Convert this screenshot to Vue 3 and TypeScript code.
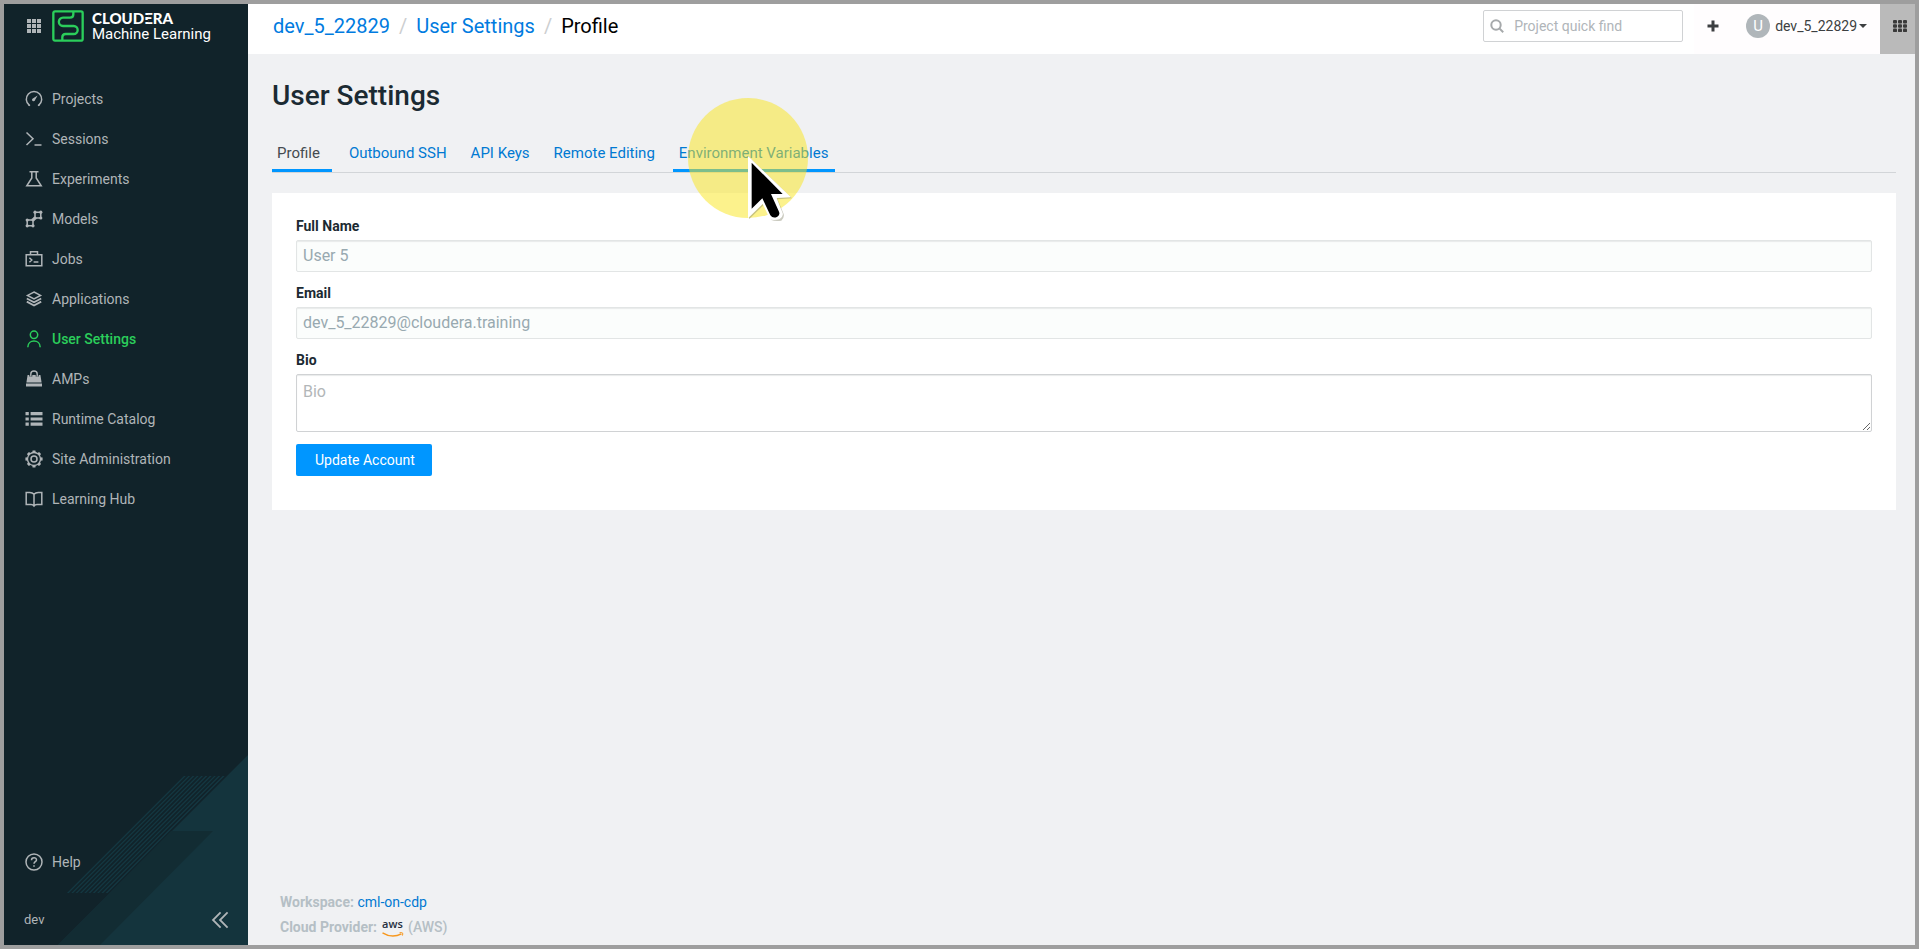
<script setup lang="ts">
import { ref } from 'vue'

interface NavItem {
  label: string
  icon: string
  active?: boolean
}

const navItems: NavItem[] = [
  { label: 'Projects', icon: 'gauge' },
  { label: 'Sessions', icon: 'prompt' },
  { label: 'Experiments', icon: 'flask' },
  { label: 'Models', icon: 'models' },
  { label: 'Jobs', icon: 'jobs' },
  { label: 'Applications', icon: 'layers' },
  { label: 'User Settings', icon: 'user', active: true },
  { label: 'AMPs', icon: 'bag' },
  { label: 'Runtime Catalog', icon: 'list' },
  { label: 'Site Administration', icon: 'gear' },
  { label: 'Learning Hub', icon: 'book' },
]

const tabs: string[] = ['Profile', 'Outbound SSH', 'API Keys', 'Remote Editing', 'Environment Variables']
const currentTab = ref('Profile')
const hoveredTab = 'Environment Variables'

const fullName = ref('User 5')
const email = ref('dev_5_22829@cloudera.training')
const bio = ref('')
const search = ref('')

const stripes = Array.from({ length: 10 }, (_, i) => i)
const cells = Array.from({ length: 9 }, (_, i) => ({ x: (i % 3) * 5, y: Math.floor(i / 3) * 5 }))
const teeth = Array.from({ length: 8 }, (_, i) => i * 45)
</script>

<template>
  <div class="frame">
    <aside class="sidebar">
      <svg class="decor" viewBox="0 0 244 190" aria-hidden="true">
        <path d="M244 0V190H54z" fill="#14343d" />
        <path d="M167 76H209L96 190H54z" fill="#122c33" />
        <path
          v-for="i in stripes"
          :key="i"
          :d="`M${180 + i * 4.3} 21h1.8l-117 117h-1.8z`"
          fill="#143842"
        />
      </svg>

      <div class="brand">
        <button class="icon-button" type="button" aria-label="Switch application">
          <svg width="14" height="14" viewBox="0 0 14 14" fill="#b0b5b8">
            <rect v-for="(c, i) in cells" :key="i" :x="c.x" :y="c.y" width="4" height="4" />
          </svg>
        </button>
        <svg class="logo" width="32" height="32" viewBox="0 0 96 96" fill="none" stroke="#2bce5b" stroke-width="7">
          <rect x="4" y="4" width="88" height="88" rx="5" />
          <path d="M64 4V13Q64 23 54 23H33A12 12 0 0 0 33 48H65A12 12 0 0 1 65 72H41Q31 72 31 82V92" />
        </svg>
        <div class="brand-text">
          <span class="brand-name">CLOUD<span class="bars">E</span>RA</span>
          <span class="brand-product">Machine Learning</span>
        </div>
      </div>

      <nav class="nav">
        <a v-for="item in navItems" :key="item.label" href="#" class="nav-link" :class="{ active: item.active }">
          <svg class="nav-icon" viewBox="0 0 18 18" fill="none" stroke="currentColor" stroke-width="1.5">
            <template v-if="item.icon === 'gauge'">
              <path d="M4.2 15.2A7.7 7.7 0 1 1 13.8 15.2" />
              <path d="M3.4 14.6l1.6 1M14.6 14.6l-1.6 1" />
              <path d="M12.6 5.4L10.2 9.8A1.6 1.6 0 1 1 8.2 8.2z" fill="currentColor" stroke="none" />
            </template>
            <template v-else-if="item.icon === 'prompt'">
              <path d="M1.5 2.5L8 8.7L1.5 15M9.5 15H16.5" />
            </template>
            <template v-else-if="item.icon === 'flask'">
              <path d="M4.5 1.8H13.5M6.8 2V8L1.8 15.8H16.2L11.2 8V2" />
            </template>
            <template v-else-if="item.icon === 'models'">
              <path d="M10 2.2H15.8V8H10zM2.2 10H8V15.8H2.2zM8 10L10 8" />
              <g fill="currentColor" stroke="none">
                <circle cx="10" cy="2.2" r="1.6" /><circle cx="15.8" cy="2.2" r="1.6" />
                <circle cx="15.8" cy="8" r="1.6" /><circle cx="9.8" cy="8.2" r="1.8" />
                <circle cx="2.2" cy="10" r="1.6" /><circle cx="8.2" cy="9.8" r="1.8" />
                <circle cx="2.2" cy="15.8" r="1.6" /><circle cx="8" cy="15.8" r="1.6" />
              </g>
            </template>
            <template v-else-if="item.icon === 'jobs'">
              <path d="M1.2 4.8H16.8V15.8H1.2zM5.5 4.6V1.8H12.5V4.6M4.4 7.8L6.8 10L4.4 12.2M8.6 12H13.4" />
            </template>
            <template v-else-if="item.icon === 'layers'">
              <path d="M9 2L15.5 5.4L9 8.8L2.5 5.4z" />
              <path d="M1.8 8.5L9 12.2L16.2 8.5M1.8 11.6L9 15.5L16.2 11.6" stroke-width="1.8" />
            </template>
            <template v-else-if="item.icon === 'user'">
              <circle cx="9" cy="4.8" r="3.7" />
              <path d="M2.8 17.2C3 9 15 9 15.2 17.2" />
            </template>
            <template v-else-if="item.icon === 'bag'">
              <path d="M2.6 5H15.4L16.6 12.4H1.4zM1 13.4H17V16.4H1z" fill="currentColor" stroke="none" />
              <path d="M5.8 6.6V4A3.2 3 0 0 1 12.2 4V6.6" stroke="#11232a" stroke-width="3" />
              <path d="M5.8 6.4V4A3.2 3 0 0 1 12.2 4V6.4" stroke-width="1.4" />
            </template>
            <template v-else-if="item.icon === 'list'">
              <path
                d="M.5 2H3.8V5.2H.5zM5.6 2H17.5V5.2H5.6zM.5 7.4H3.8V10.6H.5zM5.6 7.4H17.5V10.6H5.6zM.5 12.6H3.8V15.8H.5zM5.6 12.6H17.5V15.8H5.6z"
                fill="currentColor"
                stroke="none"
              />
            </template>
            <template v-else-if="item.icon === 'gear'">
              <circle cx="9" cy="9" r="6.5" stroke-width="1.3" />
              <path
                v-for="a in teeth"
                :key="a"
                d="M7.2 2.6L7.6 .4H10.4L10.8 2.6z"
                :transform="`rotate(${a} 9 9)`"
                fill="currentColor"
                stroke="none"
              />
              <circle cx="9" cy="9" r="3" />
            </template>
            <template v-else-if="item.icon === 'book'">
              <path d="M9 4.2C7.8 2.8 6.4 2.4 4.8 2.4H1.2V14.6H6Q8 14.6 9 16Q10 14.6 12 14.6H16.8V2.4H13.2C11.6 2.4 10.2 2.8 9 4.2V15.6" />
            </template>
          </svg>
          {{ item.label }}
        </a>
      </nav>

      <a href="#" class="nav-link help">
        <svg class="nav-icon" viewBox="0 0 18 18" fill="none" stroke="currentColor" stroke-width="1.5">
          <circle cx="9" cy="9" r="8" />
          <path d="M6.5 7.2C6.5 3.8 11.6 3.9 11.5 7C11.4 8.8 9 8.7 9 10.8" />
          <path d="M9 12.2V13.8" />
        </svg>
        Help
      </a>
      <div class="sidebar-foot">
        <span>dev</span>
        <button class="icon-button" type="button" aria-label="Collapse sidebar">
          <svg width="18" height="18" viewBox="0 0 18 18" fill="none" stroke="#b0b5b8" stroke-width="1.8">
            <path d="M9.6 1.4L2 9L9.6 16.6M16.6 1.4L9 9L16.6 16.6" />
          </svg>
        </button>
      </div>
    </aside>

    <div class="main">
      <header class="topbar">
        <nav class="crumbs" aria-label="Breadcrumb">
          <a href="#">dev_5_22829</a>
          <span class="slash">/</span>
          <a href="#">User Settings</a>
          <span class="slash">/</span>
          <span>Profile</span>
        </nav>
        <label class="search">
          <svg width="14" height="14" viewBox="0 0 14 14" fill="none" stroke="#a6a9ab" stroke-width="2">
            <circle cx="6" cy="6" r="4.7" />
            <path d="M9.4 9.4L13.2 13.2" />
          </svg>
          <input v-model="search" type="text" placeholder="Project quick find" aria-label="Project quick find" />
        </label>
        <div class="account">
          <button class="icon-button" type="button" aria-label="Create">
            <svg width="12" height="12" viewBox="0 0 12 12" stroke="#3c3f41" stroke-width="3">
              <path d="M6 .5V11.5M.5 6H11.5" />
            </svg>
          </button>
          <button class="user-menu" type="button">
            <span class="avatar">U</span>
            <span>dev_5_22829</span>
            <svg width="8" height="4" viewBox="0 0 8 4" fill="#3c3f41"><path d="M0 0H8L4 4z" /></svg>
          </button>
        </div>
        <button class="apps" type="button" aria-label="Applications">
          <svg width="14" height="12" viewBox="0 0 14 14" preserveAspectRatio="none" fill="#3a3a3a">
            <rect v-for="(c, i) in cells" :key="i" :x="c.x" :y="c.y" width="4" height="4" rx="1" />
          </svg>
        </button>
      </header>

      <main class="content">
        <h1>User Settings</h1>
        <nav class="tabs">
          <a
            v-for="tab in tabs"
            :key="tab"
            href="#"
            class="tab"
            :class="{ current: tab === currentTab, hovered: tab === hoveredTab }"
            @click.prevent="currentTab = tab"
          >
            {{ tab }}
            <span v-if="tab === hoveredTab" class="pointer" aria-hidden="true">
              <svg viewBox="0 0 120 120">
                <circle cx="60" cy="60" r="60" fill="#f9e519" fill-opacity=".5" />
                <g transform="translate(60 58) scale(.3333)">
                  <path d="M3 3V190L47 147L70 192Q80 196 100 194Q110 184 107 174L89 130L132 127z" fill="#8a8a70" fill-opacity=".45" />
                  <path d="M0 0V187L44 144L66 190Q76 194 94 190Q107 182 104 172L86 126L129 124z" fill="#fff" />
                  <path d="M11 20V158L43 127L67 178Q75 189 88 182Q97 177 93 167L69 114H104z" fill="#000" />
                </g>
              </svg>
            </span>
          </a>
        </nav>

        <form class="card" @submit.prevent>
          <label for="full-name">Full Name</label>
          <input id="full-name" v-model="fullName" type="text" disabled />
          <label for="email">Email</label>
          <input id="email" v-model="email" type="email" disabled />
          <label for="bio">Bio</label>
          <textarea id="bio" v-model="bio" placeholder="Bio"></textarea>
          <button class="submit" type="submit">Update Account</button>
        </form>
      </main>

      <footer class="footer">
        <div><b>Workspace:</b> <a href="#">cml-on-cdp</a></div>
        <div class="provider">
          <b>Cloud Provider:</b>
          <span class="aws">
            <span>aws</span>
            <svg width="22" height="5" viewBox="0 0 22 5" fill="none" stroke="#f7981f">
              <path d="M.5 .8Q10 6.6 19.5 1.8" stroke-width="1.4" />
              <path d="M17.5 .8Q22 -.4 20.4 3.6" />
            </svg>
          </span>
          <span class="provider-name">(AWS)</span>
        </div>
      </footer>
    </div>
  </div>
</template>

<style>
body {
  margin: 0;
}
</style>

<style scoped>
.frame {
  display: flex;
  box-sizing: border-box;
  min-height: 100vh;
  border: 4px solid #9e9e9e;
  background: #f0f1f3;
  color: #1b2a32;
  font-family: Roboto, "Liberation Sans", sans-serif;
  font-size: 14px;
  line-height: 20px;
}

a {
  color: #0079d2;
  text-decoration: none;
}

button,
input,
textarea {
  font-family: inherit;
}

button {
  cursor: pointer;
}

.icon-button {
  display: flex;
  padding: 0;
  border: 0;
  background: none;
}

.sidebar {
  position: relative;
  display: flex;
  flex: 0 0 244px;
  flex-direction: column;
  background: #11232a;
  color: #b0b5b8;
}

.decor {
  position: absolute;
  right: 0;
  bottom: 0;
  width: 100%;
}

.brand {
  display: flex;
  align-items: center;
  height: 44px;
  padding-left: 23px;
}

.logo {
  margin: 0 8px 0 11px;
}

.brand-text {
  display: flex;
  flex-direction: column;
  color: #fff;
  line-height: 16px;
}

.brand-name {
  font-family: Lato, sans-serif;
  font-size: 15px;
  font-weight: 900;
}

.brand-product {
  font-size: 15px;
}

.bars {
  position: relative;
}

/* Opens the stem of the E so that only its three bars remain */
.bars::before {
  content: "";
  position: absolute;
  inset: 0 auto 0 0;
  width: 4px;
  background:
    linear-gradient(#11232a, #11232a) 0 6px / 4px 2px no-repeat,
    linear-gradient(#11232a, #11232a) 0 11px / 4px 2px no-repeat;
}

.nav {
  display: flex;
  flex-direction: column;
  margin-top: 31px;
}

.nav-link {
  position: relative;
  display: flex;
  align-items: center;
  gap: 9px;
  height: 40px;
  padding-left: 21px;
  color: #b0b5b8;
}

.nav-link.active {
  color: #2bce5b;
  font-weight: 500;
}

.nav-icon {
  width: 18px;
  height: 18px;
}

.help {
  margin-top: auto;
}

.sidebar-foot {
  position: relative;
  display: flex;
  align-items: center;
  justify-content: space-between;
  margin: 28px 19px 15px 20px;
  font-size: 13px;
}

.main {
  display: flex;
  flex: 1;
  flex-direction: column;
  min-width: 0;
}

.topbar {
  display: flex;
  align-items: stretch;
  height: 50px;
  background: #fff;
}

.crumbs {
  display: flex;
  flex: 1;
  align-items: center;
  padding: 0 0 7px 25px;
  color: #000;
  font-size: 20px;
}

.crumbs a {
  color: #007be0;
}

.slash {
  margin: 0 9px;
  color: #ccced0;
}

.search {
  display: flex;
  align-items: center;
  align-self: flex-start;
  box-sizing: border-box;
  width: 200px;
  height: 32px;
  margin: 6px 11px 0 0;
  padding-left: 6px;
  border: 1px solid #d0d2d4;
  border-radius: 2px;
}

.search input {
  flex: 1;
  min-width: 0;
  padding: 0 0 1px 10px;
  border: 0;
  outline: 0;
  background: none;
  font-size: 14px;
}

.search input::placeholder {
  color: #b0b5b9;
}

.account {
  display: flex;
  align-items: center;
  padding: 0 13px 6px 13px;
  background: #fffdfe;
}

.user-menu {
  display: flex;
  align-items: center;
  margin-left: 27px;
  padding: 0;
  border: 0;
  background: none;
  color: #3c3f41;
  font-size: 14px;
}

.user-menu svg {
  margin-left: 2px;
}

.avatar {
  width: 24px;
  height: 24px;
  margin-right: 5px;
  border-radius: 50%;
  background: #b0b6ba;
  color: #fff;
  font-size: 15px;
  line-height: 24px;
}

.apps {
  display: flex;
  align-items: center;
  justify-content: center;
  width: 35px;
  padding: 0 0 6px 5px;
  border: 0;
  background: #bababa;
}

.content {
  padding: 22px 19px 0 24px;
}

h1 {
  margin: 0;
  font-size: 28px;
  font-weight: 500;
  line-height: 40px;
}

.tabs {
  display: flex;
  gap: 11px;
  margin-top: 17px;
  border-bottom: 1px solid #d2d5d8;
  font-size: 15px;
}

.tab {
  position: relative;
  height: 36px;
  padding: 0 7px 0 6px;
  border-bottom: 3px solid transparent;
  line-height: 40px;
}

.tab.current {
  padding: 0 12px 0 5px;
  border-color: #0096ff;
  color: #444b50;
}

.tab.hovered {
  border-color: #0096ff;
}

.pointer {
  position: absolute;
  top: -35px;
  left: 15px;
  z-index: 1;
  width: 120px;
  height: 120px;
  pointer-events: none;
}

.pointer svg {
  display: block;
  overflow: visible;
}

.card {
  display: flex;
  flex-direction: column;
  margin-top: 20px;
  padding: 23px 24px 34px 24px;
  background: #fff;
}

.card label {
  margin-bottom: 4px;
  font-weight: 700;
}

.card input,
.card textarea {
  box-sizing: border-box;
  width: 100%;
  margin: 0 0 11px;
  padding: 0 6px;
  border: 1px solid #d0d2d4;
  border-radius: 2px;
  box-shadow: inset 0 1px 1px #e8eaea;
  font-size: 16px;
}

.card input {
  height: 32px;
  padding-bottom: 1px;
  border-color: #e2e5e5;
  background: #fbfdfc;
  color: #98a9b0;
}

.card textarea {
  height: 58px;
  margin-bottom: 12px;
  padding-top: 6px;
  line-height: 22px;
}

.card textarea::placeholder {
  color: #b2b6b8;
}

.submit {
  align-self: flex-start;
  height: 32px;
  padding: 0 17px 0 19px;
  border: 0;
  border-radius: 2px;
  background: #0096ff;
  color: #fff;
  font-size: 14px;
}

.footer {
  margin-top: auto;
  padding: 0 0 5px 32px;
  color: #b5bfc5;
  line-height: 25px;
}

.provider {
  display: flex;
}

.provider b {
  margin-right: 5px;
}

.aws {
  display: flex;
  flex-direction: column;
  align-items: flex-start;
  width: 22px;
  margin-right: 4px;
  padding-top: 1px;
  color: #252f3e;
  font-family: "Open Sans", sans-serif;
  font-size: 11px;
  font-weight: 600;
  line-height: 16px;
}

.provider-name {
  font-weight: 500;
}
</style>
